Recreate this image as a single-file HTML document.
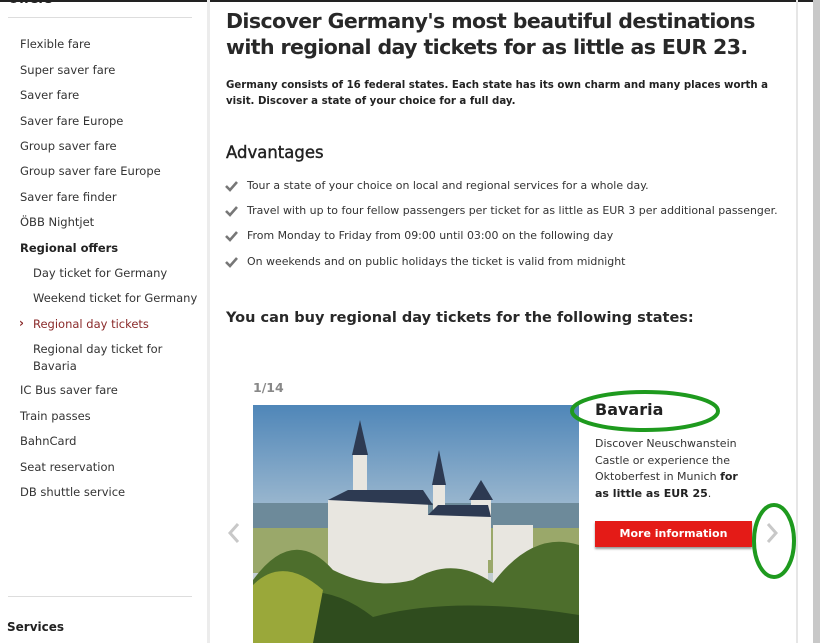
<!DOCTYPE html>
<html><head><meta charset="utf-8"><style>
*{margin:0;padding:0;box-sizing:border-box}
body{width:820px;height:643px;overflow:hidden;background:#fff;font-family:"DejaVu Sans","Liberation Sans",sans-serif;color:#333;position:relative}
.a{position:absolute;white-space:nowrap}
.s{font-size:11.5px;color:#333;left:20px;line-height:14px}
.sub{left:33px}
.m{font-size:10.95px;color:#333;line-height:14px}
</style></head><body>
<div class="a" style="left:0;top:0;width:820px;height:2px;background:#222"></div>
<div class="a" style="left:207px;top:0;width:3px;height:643px;background:#ececec"></div>
<div class="a" style="left:796px;top:0;width:2px;height:643px;background:#e6e6e6"></div>
<div class="a" style="left:813px;top:0;width:7px;height:643px;background:#c8c8c8"></div>

<div class="a" style="left:8px;top:-8px;font-size:13px;font-weight:bold;color:#222">Offers</div>
<div class="a" style="left:8px;top:17px;width:184px;height:1px;background:#ddd"></div>
<div class="a s" style="top:37px">Flexible fare</div>
<div class="a s" style="top:63px">Super saver fare</div>
<div class="a s" style="top:88px">Saver fare</div>
<div class="a s" style="top:114px">Saver fare Europe</div>
<div class="a s" style="top:139px">Group saver fare</div>
<div class="a s" style="top:164px">Group saver fare Europe</div>
<div class="a s" style="top:190px">Saver fare finder</div>
<div class="a s" style="top:215px">ÖBB Nightjet</div>
<div class="a s" style="top:241px;font-weight:bold;color:#222">Regional offers</div>
<div class="a s sub" style="top:266px">Day ticket for Germany</div>
<div class="a s sub" style="top:291px">Weekend ticket for Germany</div>
<div class="a s" style="top:316px;left:19px;color:#8a2a2a;font-weight:bold;font-size:12px">›</div>
<div class="a s sub" style="top:317px;color:#8a2a2a">Regional day tickets</div>
<div class="a s sub" style="top:341px;line-height:17px">Regional day ticket for<br>Bavaria</div>
<div class="a s" style="top:383px">IC Bus saver fare</div>
<div class="a s" style="top:409px">Train passes</div>
<div class="a s" style="top:434px">BahnCard</div>
<div class="a s" style="top:460px">Seat reservation</div>
<div class="a s" style="top:485px">DB shuttle service</div>
<div class="a" style="left:8px;top:596px;width:184px;height:1px;background:#ddd"></div>
<div class="a" style="left:7px;top:620px;font-size:12px;font-weight:bold;color:#222">Services</div>

<div class="a" style="left:226px;top:8px;font-size:20.5px;letter-spacing:-0.6px;font-weight:bold;color:#282828;line-height:26px">Discover Germany's most beautiful destinations<br>with regional day tickets for as little as EUR 23.</div>
<div class="a" style="left:226px;top:78px;font-size:10.2px;font-weight:bold;color:#222;line-height:16px">Germany consists of 16 federal states. Each state has its own charm and many places worth a<br>visit. Discover a state of your choice for a full day.</div>
<div class="a" style="left:226px;top:143px;font-size:16.5px;color:#222;-webkit-text-stroke:0.4px #222">Advantages</div>
<svg class="a" style="left:225px;top:180px" width="14" height="90"><g fill="none" stroke="#777" stroke-width="2.6"><path d="M1 6 L5 10 L12 2"/><path d="M1 31 L5 35 L12 27"/><path d="M1 56 L5 60 L12 52"/><path d="M1 82 L5 86 L12 78"/></g></svg>
<div class="a m" style="left:247px;top:179px">Tour a state of your choice on local and regional services for a whole day.</div>
<div class="a m" style="left:247px;top:204px">Travel with up to four fellow passengers per ticket for as little as EUR 3 per additional passenger.</div>
<div class="a m" style="left:247px;top:229px">From Monday to Friday from 09:00 until 03:00 on the following day</div>
<div class="a m" style="left:247px;top:255px">On weekends and on public holidays the ticket is valid from midnight</div>
<div class="a" style="left:226px;top:310px;font-size:14.5px;font-weight:bold;color:#282828">You can buy regional day tickets for the following states:</div>

<div class="a" style="left:253px;top:380px;font-size:12.5px;font-weight:bold;color:#888">1/14</div>
<svg class="a" style="left:253px;top:405px" width="326" height="238">
<defs><linearGradient id="sky" x1="0" y1="0" x2="0" y2="1"><stop offset="0" stop-color="#4f86b8"/><stop offset="0.6" stop-color="#b9cbd8"/><stop offset="1" stop-color="#d8d2c0"/></linearGradient></defs>
<rect width="326" height="238" fill="url(#sky)"/>
<rect y="98" width="326" height="25" fill="#6d8a9a"/>
<rect y="123" width="326" height="45" fill="#9aa86a"/>
<g fill="#e8e6e0">
<rect x="75" y="95" width="100" height="110"/>
<rect x="100" y="50" width="14" height="60"/>
<rect x="175" y="110" width="60" height="90"/>
<rect x="180" y="80" width="12" height="40"/>
<rect x="218" y="95" width="20" height="60"/>
<rect x="240" y="120" width="40" height="70"/>
</g>
<g fill="#2d3a52">
<path d="M75 95 L95 85 L170 85 L180 100 Z"/>
<path d="M99 50 L107 15 L115 50 Z"/>
<path d="M179 80 L186 45 L193 80 Z"/>
<path d="M216 95 L228 75 L240 95 Z"/>
<path d="M175 110 L185 100 L235 100 L238 112 Z"/>
</g>
<path d="M0 175 Q40 120 80 165 Q120 185 160 175 Q200 150 240 178 Q280 125 326 140 L326 238 L0 238 Z" fill="#4d6e2c"/>
<path d="M0 205 Q60 165 120 212 Q200 190 326 210 L326 238 L0 238Z" fill="#2f4c1e"/>
<path d="M0 180 Q30 150 70 185 L60 238 L0 238Z" fill="#9aa83a"/>
</svg>
<svg class="a" style="left:226px;top:522px" width="16" height="22"><path d="M12 2 L4 11 L12 20" fill="none" stroke="#c8c8c8" stroke-width="3"/></svg>
<svg class="a" style="left:764px;top:522px" width="16" height="22"><path d="M4 2 L12 11 L4 20" fill="none" stroke="#c8c8c8" stroke-width="3"/></svg>
<div class="a" style="left:595px;top:400px;font-size:16px;font-weight:bold;color:#222">Bavaria</div>
<div class="a" style="left:595px;top:436px;font-size:11px;color:#333;line-height:16.5px">Discover Neuschwanstein<br>Castle or experience the<br>Oktoberfest in Munich <b style="color:#222">for</b><br><b style="color:#222">as little as EUR 25</b>.</div>
<div class="a" style="left:595px;top:521px;width:157px;height:26px;background:#e41b17;box-shadow:0 2px 2px #999;color:#fff;font-size:11px;font-weight:bold;text-align:center;line-height:26px">More information</div>
<svg class="a" style="left:0;top:0" width="820" height="643"><g fill="none" stroke="#1e9a1e" stroke-width="4"><ellipse cx="645" cy="411" rx="73" ry="19"/><ellipse cx="774" cy="541" rx="20" ry="36"/></g></svg>
</body></html>
